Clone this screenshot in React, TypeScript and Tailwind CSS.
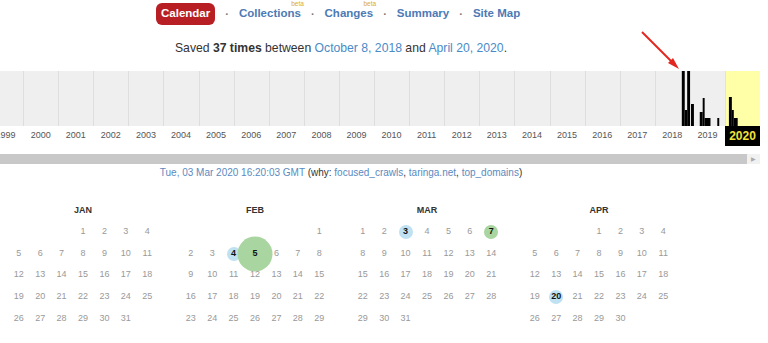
import React from "react";

type Bar = { x: number; w: number; y: number };

const years = [
  1999, 2000, 2001, 2002, 2003, 2004, 2005, 2006, 2007, 2008, 2009, 2010,
  2011, 2012, 2013, 2014, 2015, 2016, 2017, 2018, 2019, 2020,
];

// capture bars per year, in a 35 x 55 box
const bars: Record<number, Bar[]> = {
  2018: [
    { x: 26.5, w: 3, y: 0 },
    { x: 29.5, w: 2.5, y: 39 },
    { x: 32, w: 3, y: 0 },
  ],
  2019: [
    { x: 0, w: 3, y: 33 },
    { x: 9, w: 3, y: 41 },
    { x: 12, w: 2, y: 27 },
    { x: 14, w: 6, y: 47 },
    { x: 27, w: 2, y: 47 },
  ],
  2020: [
    { x: 3, w: 3, y: 26 },
    { x: 6, w: 2, y: 39 },
    { x: 8, w: 4, y: 47 },
  ],
};

type Mark = { kind: "blue" | "green" | "big" };

const months: { name: string; offset: number; days: number; marks: Record<number, Mark> }[] = [
  { name: "JAN", offset: 3, days: 31, marks: {} },
  { name: "FEB", offset: 6, days: 29, marks: { 4: { kind: "blue" }, 5: { kind: "big" } } },
  { name: "MAR", offset: 0, days: 31, marks: { 3: { kind: "blue" }, 7: { kind: "green" } } },
  { name: "APR", offset: 3, days: 30, marks: { 20: { kind: "blue" } } },
];

function NavLink({ label, beta }: { label: string; beta?: boolean }) {
  return (
    <span className="relative text-[11.5px] font-bold text-[#4d7ab5]">
      {label}
      {beta && (
        <span className="absolute right-[-3px] top-[-4px] leading-none text-[6.5px] font-normal text-[#dba932]">
          beta
        </span>
      )}
    </span>
  );
}

function Dot() {
  return <span className="text-[11px] font-bold text-[#777] mx-[10px]">·</span>;
}

function Month({ m }: { m: (typeof months)[number] }) {
  const cells: (number | null)[] = [];
  for (let i = 0; i < m.offset; i++) cells.push(null);
  for (let d = 1; d <= m.days; d++) cells.push(d);
  return (
    <div className="w-[150px]">
      <div className="h-[21px] flex items-center justify-center text-[9px] font-bold text-[#333]">
        {m.name}
      </div>
      <div className="grid grid-cols-7">
        {cells.map((d, i) => {
          const mark = d ? m.marks[d] : undefined;
          return (
            <div key={i} className="relative h-[21.7px] flex items-center justify-center">
              {mark?.kind === "big" && (
                <span className="absolute left-1/2 top-1/2 -translate-x-1/2 -translate-y-1/2 w-[35px] h-[35px] rounded-full bg-[#a9d5a0]" />
              )}
              {mark?.kind === "blue" && (
                <span className="absolute left-1/2 top-1/2 -translate-x-1/2 -translate-y-1/2 w-[14px] h-[14px] rounded-full bg-[#bfe1f1]" />
              )}
              {mark?.kind === "green" && (
                <span className="absolute left-1/2 top-1/2 -translate-x-1/2 -translate-y-1/2 w-[14px] h-[14px] rounded-full bg-[#a9d5a0]" />
              )}
              {d && (
                <span
                  className={
                    mark
                      ? "relative text-[9px] font-bold text-[#111]"
                      : "relative text-[9px] text-[#999]"
                  }
                >
                  {d}
                </span>
              )}
            </div>
          );
        })}
      </div>
    </div>
  );
}

export default function App() {
  return (
    <div
      className="relative w-[768px] h-[343px] overflow-hidden bg-white text-[#333]"
      style={{ fontFamily: '"Liberation Sans", Arial, sans-serif' }}
    >
      {/* top nav */}
      <div className="flex items-center pt-[3px] pl-[156px]">
        <span className="h-[22px] px-[5px] rounded-[6px] bg-[#b81f25] text-white text-[11.5px] font-bold flex items-center">
          Calendar
        </span>
        <Dot />
        <NavLink label="Collections" beta />
        <Dot />
        <NavLink label="Changes" beta />
        <Dot />
        <NavLink label="Summary" />
        <Dot />
        <NavLink label="Site Map" />
      </div>

      <div className="w-[682px] mt-[15px] h-[16px] leading-[16px] text-center text-[12.2px] text-[#333]">
        Saved <b>37 times</b> between{" "}
        <span className="text-[#4a8bc7]">October 8, 2018</span> and{" "}
        <span className="text-[#4a8bc7]">April 20, 2020</span>.
      </div>

      {/* sparkline */}
      <div className="mt-[15px] flex ml-[-12px]">
        {years.map((y) => (
          <div key={y} className="w-[35.1px] shrink-0 flex flex-col">
            <div
              className={
                y === 2020
                  ? "h-[55px] bg-[#ffffa8] border-l border-[#e2e2e2]"
                  : "h-[55px] bg-[#efefef] border-l border-[#dedede]"
              }
            >
              {bars[y] && (
                <svg viewBox="0 0 35 55" preserveAspectRatio="none" className="block w-full h-full">
                  {bars[y].map((b, i) => (
                    <rect key={i} x={b.x} y={b.y} width={b.w} height={55 - b.y} fill="#000" />
                  ))}
                </svg>
              )}
            </div>
            {y === 2020 ? (
              <div className="h-[20px] bg-black text-[#f2e23a] text-[12px] font-bold flex items-center justify-center">
                2020
              </div>
            ) : (
              <div className="h-[20px] text-[9px] text-[#555] flex items-center justify-center">
                {y}
              </div>
            )}
          </div>
        ))}
      </div>

      {/* scrollbar */}
      <div className="mt-[8px] flex h-[10px] w-[760px]">
        <div className="flex-1 bg-[#c8c8c8]" />
        <div className="w-[13px] bg-[#f1f1f1] flex items-center justify-center text-[6px] text-[#aaa]">
          ▶
        </div>
      </div>

      <div className="w-[682px] mt-[2px] h-[14px] leading-[14px] text-center text-[10px] text-[#333]">
        <span className="text-[#5a8ac0]">Tue, 03 Mar 2020 16:20:03 GMT</span> (why:{" "}
        <span className="text-[#5a8ac0]">focused_crawls</span>,{" "}
        <span className="text-[#5a8ac0]">taringa.net</span>,{" "}
        <span className="text-[#5a8ac0]">top_domains</span>)
      </div>

      {/* calendar */}
      <div className="mt-[20px] ml-[8px] flex gap-[22px]">
        {months.map((m) => (
          <Month key={m.name} m={m} />
        ))}
      </div>

      {/* annotation arrow */}
      <svg className="absolute left-0 top-0 pointer-events-none" width="768" height="343">
        <line x1="642" y1="32" x2="674" y2="64" stroke="#e3261f" strokeWidth="2" />
        <polygon points="679,69 668,63 673,58" fill="#e3261f" />
      </svg>
    </div>
  );
}
